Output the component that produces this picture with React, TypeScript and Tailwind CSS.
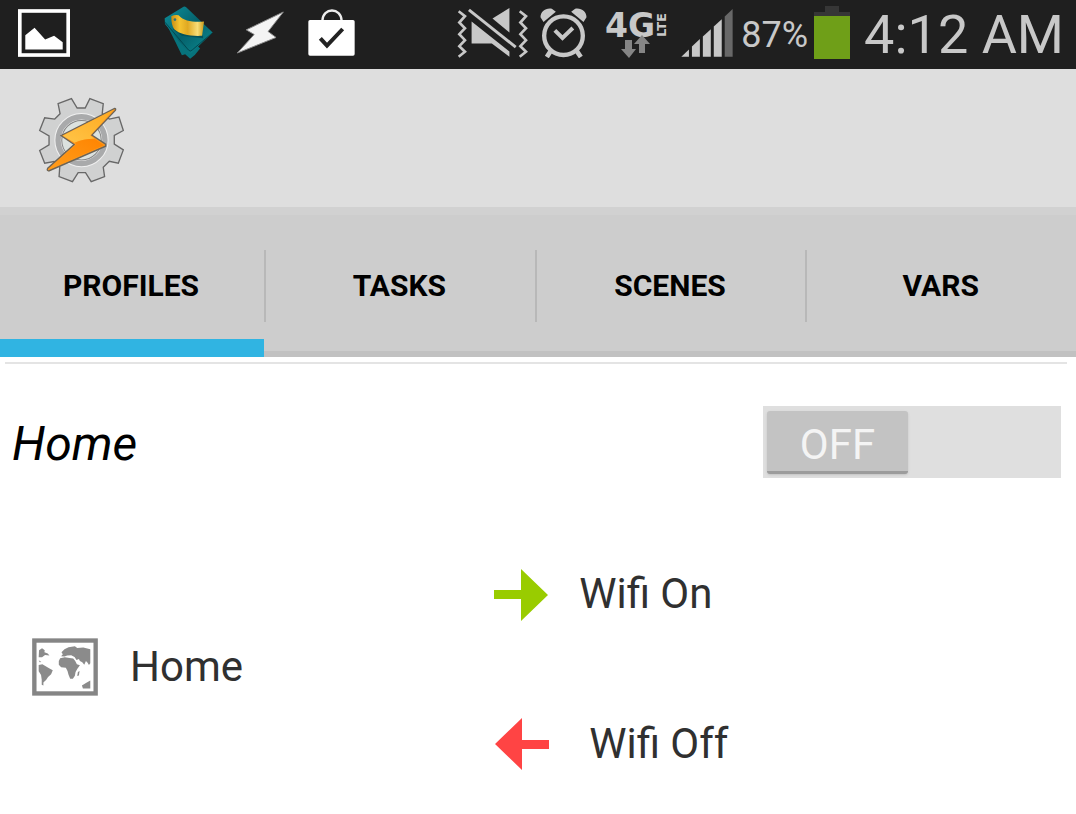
import { useState } from 'react';

const TABS = ['PROFILES', 'TASKS', 'SCENES', 'VARS'];

function PictureIcon() {
  return (
    <svg viewBox="54 27 157 144" className="w-[52px] h-12" aria-hidden="true">
      <rect x="59.500" y="32.500" width="146" height="133" fill="none" stroke="#fff" strokeWidth="11" />
      <path d="M76 149V106L104 83L136 119L163 107L189 127V149Z" fill="#fff" />
    </svg>
  );
}

function TagIcon() {
  return (
    <svg viewBox="491 18 148 160" className="w-[49px] h-[53px]" aria-hidden="true">
      <defs>
        <linearGradient id="card" x1="0" y1="0" x2="1" y2="1">
          <stop offset="0" stopColor="#0d8f9b" />
          <stop offset="0.5" stopColor="#05616b" />
          <stop offset="1" stopColor="#0b8d94" />
        </linearGradient>
        <linearGradient id="ribbon" x1="0" x2="1">
          <stop offset="0" stopColor="#c98d13" />
          <stop offset="0.25" stopColor="#f5c431" />
          <stop offset="0.5" stopColor="#e0a922" />
          <stop offset="0.8" stopColor="#f7dd77" />
          <stop offset="1" stopColor="#c99a17" />
        </linearGradient>
      </defs>
      <path d="M495 66L527 130L532 140L545 167L555 164L570 177L584 166L600 146L545 90Z" fill="#07737c" />
      <path d="M493 55L550 20Q554 18 558 22L638 98L574 160Q567 164 563 158L494 72Z" fill="url(#card)" />
      <path d="M494 67L565 151Q570 157 576 151L636 100" fill="none" stroke="#034850" strokeWidth="3" />
      <path d="M518 88L545 108L609 115L609 108L530 80Z" fill="#04525b" />
      <path d="M513 49Q525 43 535 46C552 65 580 67 612 65L606 108C570 110 538 103 522 88Q513 77 513 49Z" fill="url(#ribbon)" />
      <circle cx="524" cy="59" r="4" fill="#31747a" />
    </svg>
  );
}

function BoltIcon() {
  return (
    <svg viewBox="711 35 142 128" className="w-[47px] h-[43px]" aria-hidden="true">
      <path d="M851 37L739 91L763 105L712 161L829 114L805 96Z" fill="#f4f4f4" stroke="#8a8a8a" strokeWidth="3" />
    </svg>
  );
}

function StoreIcon() {
  return (
    <svg viewBox="924 18 141 141" className="size-[47px]" aria-hidden="true">
      <path d="M967 54C968 12 1024 12 1025 54" fill="none" stroke="#ededed" strokeWidth="7" />
      <rect x="925" y="51" width="139" height="107" rx="5" fill="#fff" />
      <path d="M961 106L981 128L1028 78" fill="none" stroke="#222" strokeWidth="12" />
    </svg>
  );
}

function VibrateIcon() {
  return (
    <svg viewBox="25 20 214 152" className="w-[71px] h-[51px]" aria-hidden="true">
      <path d="M69 63L183 153V169L130 129H69Z" fill="#c8c8c8" />
      <path d="M183 22V96L132 54Z" fill="#c8c8c8" />
      <path d="M61 28L202 140" stroke="#c8c8c8" strokeWidth="9" />
      <path
        d="M30 32L49 47L32 66L49 83L32 101L49 119L32 137L49 154L30 169M214 32L233 47L216 66L233 83L216 101L233 119L216 137L233 154L214 169"
        fill="none"
        stroke="#c8c8c8"
        strokeWidth="8"
      />
    </svg>
  );
}

function AlarmIcon() {
  return (
    <svg viewBox="276 22 140 150" className="w-[47px] h-[50px]" fill="none" stroke="#c8c8c8" aria-hidden="true">
      <circle cx="346" cy="105" r="58" strokeWidth="13" />
      <path d="M320 89L343 112L374 82" strokeWidth="12" />
      <path d="M308 150L296 169M385 150L398 169" strokeWidth="14" />
      <path d="M277 50C277 32 292 21 311 24L323 33L286 64ZM415 50C415 32 400 21 381 24L369 33L406 64Z" fill="#c8c8c8" stroke="none" />
    </svg>
  );
}

function NetworkIcon() {
  return (
    <svg viewBox="0 -6 64 58" className="w-16 h-[58px]" fontFamily="'DejaVu Sans', sans-serif" fontWeight="700" fill="#c8c8c8" aria-label="4G LTE">
      <text x="0" y="27" fontSize="33">4G</text>
      <text x="-27" y="61" fontSize="13" transform="rotate(-90)">LTE</text>
      <path d="M20 30H27V39H31L24 48L16 39H20Z" fill="#858585" />
      <path d="M34 43H40V34H45L37 25L29 34H34Z" fill="#858585" />
    </svg>
  );
}

function SignalIcon() {
  return (
    <svg viewBox="694 30 155 145" className="w-[52px] h-12" fill="#c8c8c8" aria-hidden="true">
      <path d="M694 174L717 152V174Z" />
      <path d="M726 174V143L750 121V174Z" />
      <path d="M759 174V113L783 91V174Z" />
      <path d="M792 174V83L816 61V174Z" />
      <path d="M825 174V53L849 30V174Z" fill="#686868" />
    </svg>
  );
}

function BatteryIcon() {
  return (
    <svg viewBox="0 0 36 53" className="w-9 h-[53px]" aria-hidden="true">
      <path d="M11 0H25V6H36V11H0V6H11Z" fill="#363636" />
      <rect y="10" width="36" height="43" fill="#6f9f18" />
    </svg>
  );
}

function GearIcon() {
  return (
    <svg viewBox="55 37 260 260" className="size-[87px]" aria-hidden="true">
      <defs>
        <linearGradient id="boltTop" x1="1" y1="0" x2="0" y2="1">
          <stop offset="0" stopColor="#ffa91f" />
          <stop offset="1" stopColor="#ffc548" />
        </linearGradient>
        <linearGradient id="boltBottom" x1="1" y1="0" x2="0" y2="1">
          <stop offset="0" stopColor="#ff8400" />
          <stop offset="1" stopColor="#ff9d1c" />
        </linearGradient>
      </defs>
      <path
        d="M115 57L155 42L172 70H196L210 42L250 57L247 86L268 103L297 97L310 137L283 152V178L310 195L295 235L268 229L250 247L254 275L214 290L197 263H175L158 290L118 275L120 246L103 230L75 235L60 197L88 180V153L60 137L75 99L105 103L121 87Z"
        fill="#d0d1d1"
        stroke="#686868"
        strokeWidth="4"
      />
      <circle cx="185" cy="166" r="70" fill="none" stroke="#f0f0f0" strokeWidth="22" />
      <circle cx="185" cy="166" r="70" fill="none" stroke="#a9aaab" strokeWidth="16" />
      <circle cx="185" cy="166" r="59" fill="#dce2df" stroke="#858585" strokeWidth="3" />
      <path
        d="M124 152L284 71Q289 71 286 77L216 151L257 178V184L87 258Q80 257 84 250L163 179Z"
        fill="#ff981b"
        stroke="#6b6458"
        strokeWidth="4"
      />
      <path d="M129 153L282 74L211 152L224 162Q190 162 165 174Z" fill="url(#boltTop)" />
      <path d="M165 174Q190 162 224 162L252 181L87 254L170 178Z" fill="url(#boltBottom)" />
    </svg>
  );
}

function MapIcon() {
  return (
    <svg viewBox="37 40 197 172" className="w-[66px] h-[58px]" fill="#8b8b8b" aria-hidden="true">
      <rect x="44" y="47" width="183" height="158" fill="#fff" stroke="#858585" strokeWidth="13" />
      <path d="M58 76L67 70L75 76L74 82L84 86L89 92L76 90L67 97H57Z" />
      <path d="M57 106L65 111L60 112Z" />
      <path d="M57 120L68 118L78 124L88 130L99 136L94 148L85 156L79 165L71 172V181L66 179V164L64 150L57 139Z" />
      <path d="M125 82L134 73L146 67L165 64L172 69L190 68L211 73V115L207 120L203 113L198 108L193 119L187 112L180 108L177 102L170 105L164 96L154 91L142 92L134 95L124 94L129 88Z" />
      <path d="M121 100L135 97L149 99L160 101L166 108L171 118L180 121L172 132L167 141L165 152L159 161L151 161L146 149L143 138L138 128L124 127L117 119V108Z" />
      <path d="M174 141L179 138L177 151L172 153Z" />
      <path d="M186 181L198 174L211 166V190H189Z" />
    </svg>
  );
}

function EnterArrow() {
  return (
    <svg viewBox="0 0 56 54" className="w-14 h-[54px]" aria-hidden="true">
      <path d="M1 23H28V2L55 28L28 54V32H1Z" fill="#9c0" />
    </svg>
  );
}

function ExitArrow() {
  return (
    <svg viewBox="0 0 56 54" className="w-14 h-[54px]" aria-hidden="true">
      <path d="M56 23H29V1L2 27L29 53V32H56Z" fill="#f44" />
    </svg>
  );
}

function StatusBar() {
  return (
    <header className="flex h-[69px] items-center justify-between bg-[#1f1f1f] pl-[18px] pr-3 pb-1 text-[#c8c8c8]">
      <div className="flex items-center gap-6">
        <PictureIcon />
        <div className="ml-[70px] flex items-center gap-6">
          <TagIcon />
          <BoltIcon />
          <StoreIcon />
        </div>
      </div>
      <div className="flex items-center">
        <VibrateIcon />
        <div className="ml-3 mr-[18px]">
          <AlarmIcon />
        </div>
        <NetworkIcon />
        <div className="ml-3 mr-2">
          <SignalIcon />
        </div>
        <span className="mr-[6px] pt-1 text-[36px] leading-[48px]">87%</span>
        <BatteryIcon />
        <span className="ml-[14px] pt-1 text-[54px] leading-[60px]">4:12 AM</span>
      </div>
    </header>
  );
}

export default function App() {
  const [active, setActive] = useState('PROFILES');
  const [enabled, setEnabled] = useState(false);

  return (
    <div className="min-h-screen bg-white font-[Roboto,sans-serif] text-[#303030]">
      <StatusBar />

      <div className="flex h-[138px] items-center bg-[#dedede] pl-[38px] pt-1">
        <GearIcon />
      </div>

      <nav role="tablist" className="flex h-[150px] items-center border-t-8 border-[#d1d1d1] bg-[#cdcdcd]">
        {TABS.map((tab, index) => (
          <div
            key={tab}
            className={`flex h-full items-center ${index === 0 ? 'w-[264px]' : 'flex-1'} ${
              active === tab
                ? 'border-b-[18px] border-[#30b4e2] pt-[18px]'
                : 'border-b-[6px] border-[#c1c1c1] pt-[6px]'
            }`}
          >
            {index > 0 && <span className="h-[72px] w-[2px] bg-[#b8b8b8]" />}
            <button
              role="tab"
              aria-selected={active === tab}
              onClick={() => setActive(tab)}
              className="h-full flex-1 pr-[2px] text-[30px] font-bold leading-9 text-black"
            >
              {tab}
            </button>
          </div>
        ))}
      </nav>

      <main className="pt-[5px]">
        <hr className="ml-[5px] mr-[9px] border-t-2 border-[#e4e4e4]" />

        <div className="flex items-center justify-between pl-3 pr-[15px] pt-10">
          <h1 className="pt-1 text-[48px] italic leading-[72px] text-black">Home</h1>
          <label className={`flex h-[72px] w-[298px] cursor-pointer bg-[#dfdfdf] px-1 pb-1 pt-[5px] ${enabled ? 'justify-end' : ''}`}>
            <input
              type="checkbox"
              role="switch"
              aria-label="Home profile"
              checked={enabled}
              onChange={(e) => setEnabled(e.target.checked)}
              className="sr-only"
            />
            <span className="h-full w-[141px] rounded-[3px] border-b-[3px] border-[#9c9c9c] bg-[#c3c3c3] text-center text-[42px] leading-[68px] text-[#f4f4f4] shadow-sm">
              {enabled ? 'ON' : 'OFF'}
            </span>
          </label>
        </div>

        <div className="grid grid-cols-[11fr_13fr] items-center pt-[87px] pb-10 text-[42px] leading-[54px]">
          <div className="flex items-center gap-8 pl-8 pb-1">
            <MapIcon />
            <span>Home</span>
          </div>
          <div className="flex flex-col gap-24">
            <div className="flex items-center gap-[30px]">
              <EnterArrow />
              <span>Wifi On</span>
            </div>
            <div className="flex items-center gap-10">
              <ExitArrow />
              <span>Wifi Off</span>
            </div>
          </div>
        </div>
      </main>
    </div>
  );
}
